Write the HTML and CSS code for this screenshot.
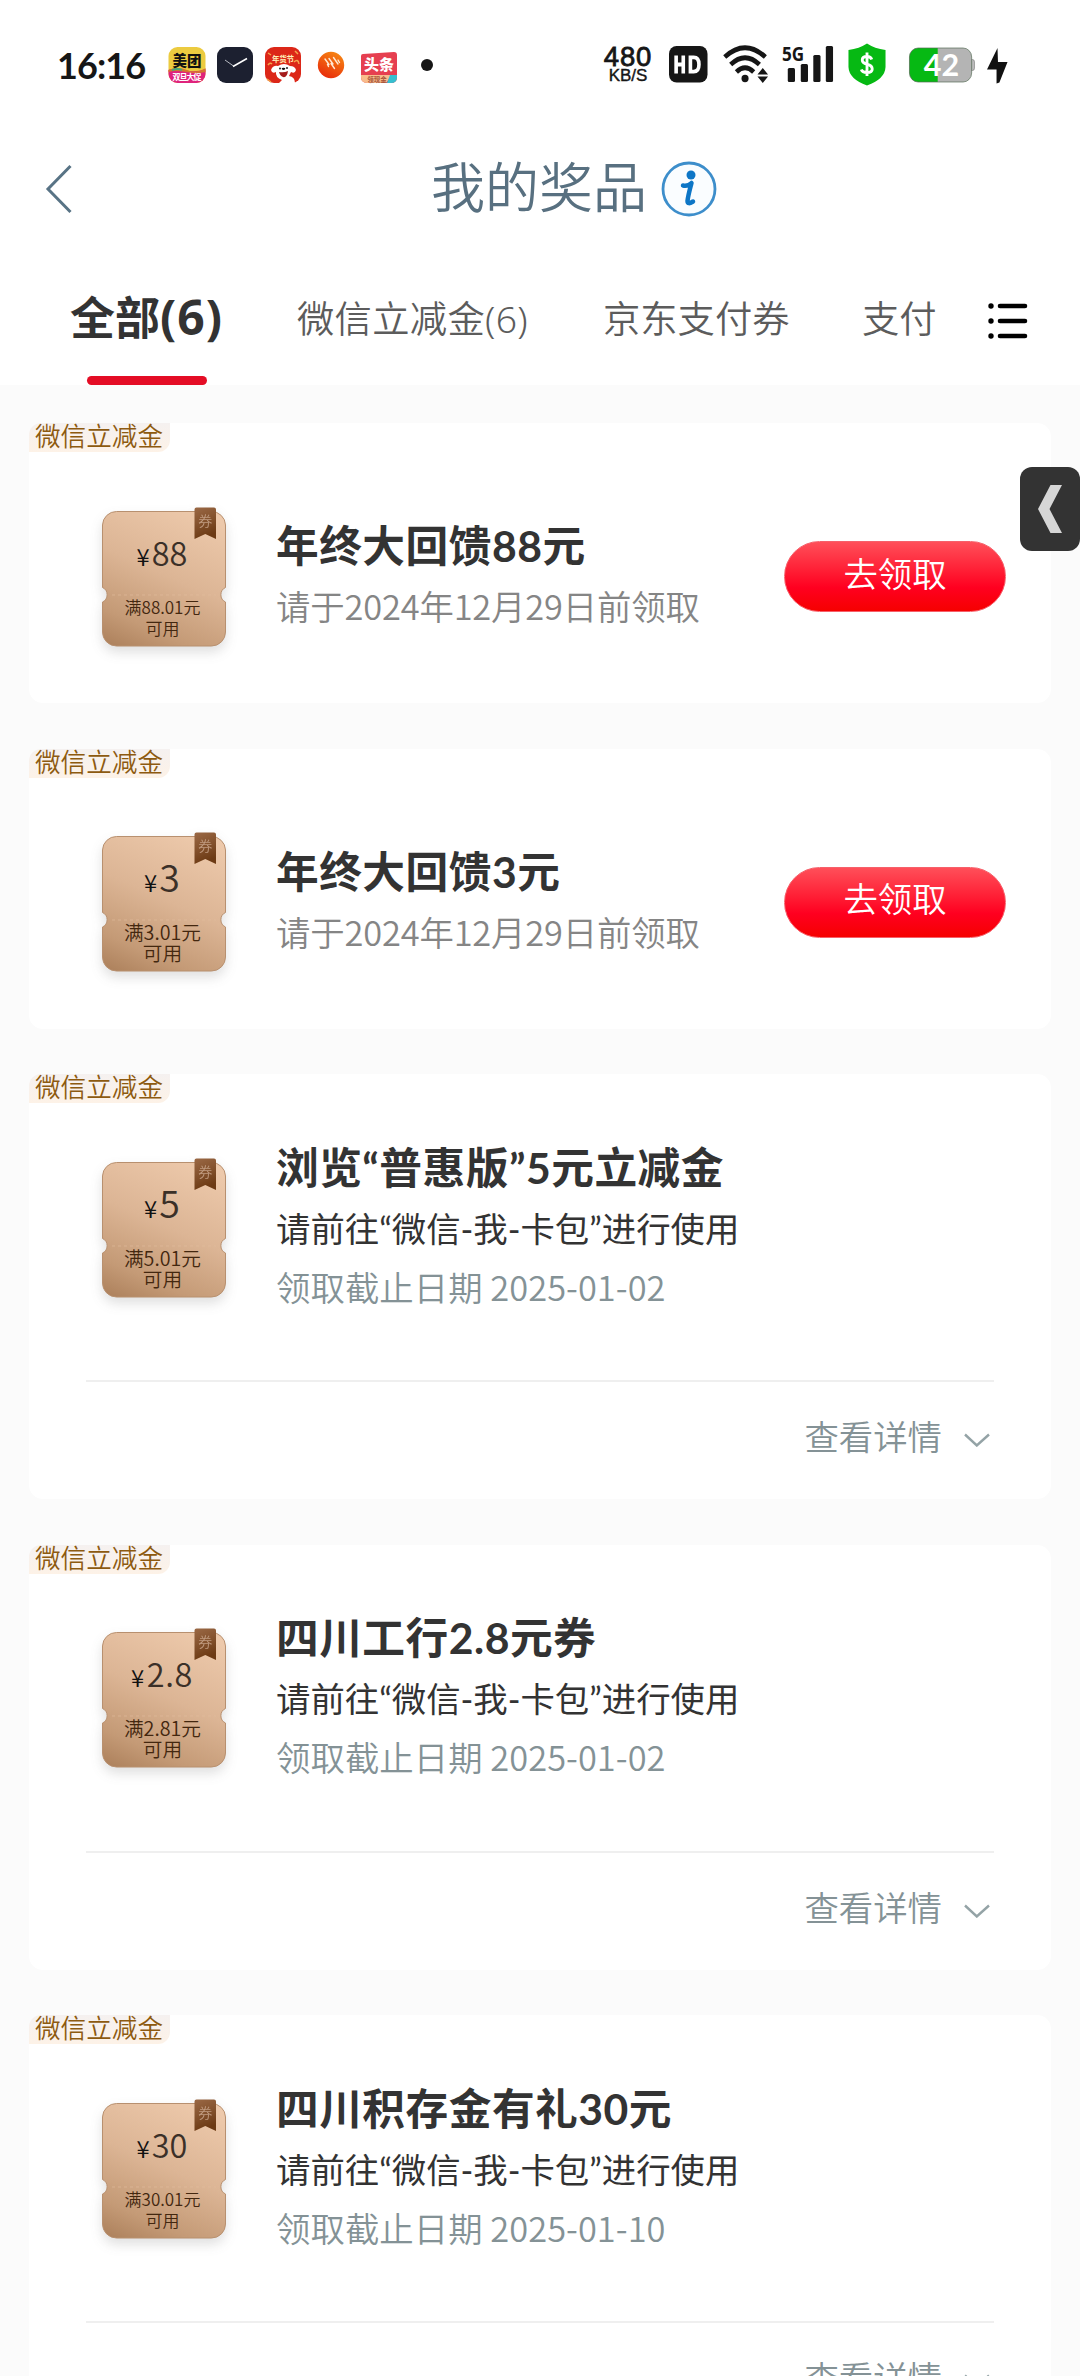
FILE: index.html
```html
<!DOCTYPE html>
<html lang="zh-CN">
<head>
<meta charset="utf-8">
<title>我的奖品</title>
<link rel="stylesheet" href="styles.css">
</head>
<body>
<svg class="defs" width="0" height="0" aria-hidden="true">
  <defs>
    <linearGradient id="copper" gradientUnits="userSpaceOnUse" x1="100" y1="10" x2="35" y2="155">
      <stop offset="0" stop-color="#edc9ab"/><stop offset="0.45" stop-color="#dcb595"/><stop offset="0.8" stop-color="#c49a76"/><stop offset="1" stop-color="#ad815c"/>
    </linearGradient>
    <linearGradient id="ribbon" x1="0" y1="0" x2="0.3" y2="1">
      <stop offset="0" stop-color="#9a6845"/><stop offset="0.5" stop-color="#85532e"/><stop offset="1" stop-color="#6c3a14"/>
    </linearGradient>
    <symbol id="coupon" viewBox="0 0 150 170">
      <path d="M28.500 14.500H123.500A14 14 0 0 1 137.500 28V90.500A8 8 0 0 0 137.500 105V135A14 14 0 0 1 123.500 149H28.500A14 14 0 0 1 14.500 135V105A8 8 0 0 0 14.500 90.500V28A14 14 0 0 1 28.500 14.500Z" fill="url(#copper)" stroke="#b8906f" stroke-width="1"/>
      <path d="M24 98H128" stroke="#e2bd9e" stroke-width="1" stroke-dasharray="3 3" opacity=".6"/>
      <path d="M106.500 12.500a2 2 0 0 1 2-2h17.500a2 2 0 0 1 2 2v29.500l-10.700-5-10.800 5z" fill="url(#ribbon)"/>
      <text x="117.300" y="29" font-size="14" text-anchor="middle" fill="#c09b80">券</text>
    </symbol>
    <symbol id="down" viewBox="0 0 26 14"><path d="M1 1.500 12.800 12.500 25 1.500" fill="none" stroke="#94a3a6" stroke-width="2.400"/></symbol>
  </defs>
</svg>

<header class="status">
  <span class="time">16:16</span>
  <svg class="app meituan" width="38" height="38" viewBox="0 0 38 38">
    <defs><clipPath id="mt"><rect x="0.500" y="1" width="37" height="36" rx="9"/></clipPath></defs>
    <g clip-path="url(#mt)"><rect width="38" height="38" fill="#eccb40"/><path d="M0 24Q8 21 17 24T38 23V38H0Z" fill="#df237c"/><path d="M0 24Q10 20 19 24T38 22V26Q28 28 18 26T0 26Z" fill="#d5762e"/><path d="M4 24q6-2 10 0" stroke="#45a67a" stroke-width="2" fill="none"/></g>
    <text x="19" y="20" font-size="14.500" font-weight="900" text-anchor="middle" fill="#111">美团</text>
    <text x="19" y="34" font-size="8" font-weight="700" text-anchor="middle" textLength="29" fill="#fff">双旦大促</text>
  </svg>
  <svg class="app" width="38" height="38" viewBox="0 0 38 38"><rect x="1" y="1" width="36" height="36" rx="9" fill="#1c2030"/><path d="M9 14 17.500 20" stroke="#b5b8c0" stroke-width="1"/><path d="M17 20.500 31 12.500" stroke="#fff" stroke-width="1.600"/></svg>
  <svg class="app" width="38" height="38" viewBox="0 0 38 38">
    <rect x="1" y="1" width="36" height="36" rx="9" fill="#dc2718"/>
    <path d="M4 7l3 2M31 5l3 3M3 33l4 3M30 16q4-4 5 2M4 19q2-3 4-1" stroke="#f4a44b" stroke-width="1.500" fill="none"/>
    <text x="19" y="15.500" font-size="7.500" font-weight="700" text-anchor="middle" textLength="22" fill="#fff0b8">年货节</text>
    <path d="M7 24Q9 19 14 20Q20 16 26 20Q31 20 32 24Q31 28 27 26L25 30Q31 31 31 37H15L18 34Q11 31 12 26Q8 28 7 24Z" fill="#fff"/>
    <circle cx="16" cy="22.500" r="1" fill="#222"/><circle cx="23" cy="22" r="1" fill="#222"/><ellipse cx="19.500" cy="22.800" rx="1.800" ry="1.100" fill="#111"/><path d="M15 26Q20 27 24 25Q23 32 19 31Q16 30 15 26Z" fill="#a51c1c"/>
  </svg>
  <svg class="app ball" width="28" height="28" viewBox="0 0 28 28"><defs><linearGradient id="or" x1=".8" y1="0" x2=".3" y2="1"><stop offset="0" stop-color="#f78812"/><stop offset="1" stop-color="#e82b0b"/></linearGradient></defs><circle cx="14" cy="14" r="13.200" fill="url(#or)"/><path d="M8 8 12 13.500M12 7.500 16 13M16.500 6.500 21 13M14 12.500 17.500 17.500M10.500 13.500 11.500 15.500M21 9 22.500 11.500" stroke="#ffe9d4" stroke-width="1.400" stroke-linecap="round"/></svg>
  <svg class="app news" width="38" height="34" viewBox="0 0 38 34"><path d="M1 5Q1 3 3 3L34 1Q37 1 37 4V26Q37 32 31 32H8Q1 32 1 26Z" fill="#e63f50"/><path d="M1 24H32L26 32H8Q1 32 1 26Z" fill="#f8bd8d"/><path d="M30 24H37V26Q37 32 31 32H27Z" fill="#36bfd0"/><text x="19" y="19" font-size="15" font-weight="900" text-anchor="middle" fill="#fff">头条</text><text x="17" y="30.500" font-size="6.500" font-weight="700" text-anchor="middle" fill="#a9543a">领现金</text></svg>
  <span class="dot"></span>
  <span class="speed"><b>480</b><i>KB/S</i></span>
  <svg class="hd" width="39" height="37" viewBox="0 0 41 37" preserveAspectRatio="none"><rect width="40.500" height="36.500" rx="8" fill="#161616"/><path d="M7.500 9.500V27.500M15 9.500V27.500M7.500 18.500H15" stroke="#fff" stroke-width="3.800" fill="none"/><path d="M22.500 11.400V25.600H26Q31.500 25.600 31.500 18.500T26 11.400Z" stroke="#fff" stroke-width="3.800" fill="none"/></svg>
  <svg class="wifi" width="46" height="38" viewBox="0 0 48 38" preserveAspectRatio="none"><g fill="none" stroke="#161616" stroke-width="4.800"><path d="M1.800 12Q23 -6.500 44.200 12"/><path d="M8 19.500Q23 6 38 19.500"/><path d="M14 27Q23 18.500 32 27"/></g><circle cx="23" cy="33.500" r="3.700" fill="#161616"/><path d="M36 29.500 41.500 23 47 29.500ZM36 31.500H47L41.500 38Z" fill="#161616"/></svg>
  <svg class="signal" width="52" height="38" viewBox="0 0 54 38" preserveAspectRatio="none"><text x="0" y="16" font-size="20" font-weight="700" textLength="23" lengthAdjust="spacingAndGlyphs" fill="#161616">5G</text><g fill="#161616"><rect x="6" y="23" width="7.500" height="14" rx="1.500"/><rect x="19.500" y="19" width="7.500" height="18" rx="1.500"/><rect x="32.500" y="10" width="7.500" height="27" rx="1.500"/><rect x="45.500" y="1" width="7.500" height="36" rx="1.500"/></g></svg>
  <svg class="shield" width="38" height="43" viewBox="0 0 40 43" preserveAspectRatio="none"><path d="M20 .5Q28 5.500 39.500 7V24Q39 36 20 42.500Q1 36 .5 24V7Q12 5.500 20 .5Z" fill="#06b913"/><path d="M25 16.500Q24 13.500 20 13.500Q15 13.500 15 17Q15 20 20 21.200Q25.500 22.500 25.500 26Q25.500 29.500 20 29.500Q15 29.500 14 26.500M20 9.500V33" fill="none" stroke="#fff" stroke-width="3"/></svg>
  <svg class="battery" width="66" height="36" viewBox="0 0 69 36" preserveAspectRatio="none"><defs><clipPath id="bt"><rect x=".5" y="1" width="65" height="34" rx="9"/></clipPath></defs><path d="M65 12.500H66.500Q68.500 12.500 68.500 15V21Q68.500 23.500 66.500 23.500H65Z" fill="#bcbcbc" stroke="#777" stroke-width=".6"/><g clip-path="url(#bt)"><rect width="69" height="36" fill="#b4b4b4"/><rect width="30" height="36" fill="#06b913"/></g><rect x=".5" y="1" width="65" height="34" rx="9" fill="none" stroke="#556b55" stroke-width=".7"/><text x="34" y="28.500" font-size="30" font-weight="700" text-anchor="middle" textLength="37" lengthAdjust="spacingAndGlyphs" fill="#fff">42</text></svg>
  <svg class="bolt" width="21" height="36" viewBox="0 0 22 36" preserveAspectRatio="none"><path d="M11 0 0 21.500H10V35.500L13 34.500 21.500 14H11.500Z" fill="#111"/></svg>
</header>

<nav class="titlebar">
  <svg class="back" width="28" height="50" viewBox="0 0 28 50"><path d="M25.500 2 3 25 25.500 48" fill="none" stroke="#587385" stroke-width="3"/></svg>
  <h1>我的奖品</h1>
  <svg class="info" width="58" height="58" viewBox="0 0 58 58"><circle cx="29" cy="29" r="26" fill="#fafdff" stroke="#3d8ecb" stroke-width="2.800"/><circle cx="31" cy="15" r="4.500" fill="#0d76c6"/><path d="M23 25.500Q28 26.500 31.500 23Q28 36 27.500 41Q27.500 45 33 41.500" fill="none" stroke="#0d76c6" stroke-width="4.500" stroke-linejoin="round" stroke-linecap="round"/></svg>
</nav>

<nav class="tabs">
  <a class="tab active">全部<span class="count">(6)</span></a>
  <a class="tab t2">微信立减金(6)</a>
  <a class="tab t3">京东支付券</a>
  <a class="tab t4">支付</a>
  <svg class="menu" width="40" height="36" viewBox="0 0 40 36"><path d="M12 3H37M12 18H37M12 33H37" stroke="#000" stroke-width="4.600" stroke-linecap="round"/><g fill="#000"><circle cx="3" cy="3" r="2.700"/><circle cx="3" cy="18" r="2.700"/><circle cx="3" cy="33" r="2.700"/></g></svg>
</nav>

<main class="list">
  <article class="card short">
    <span class="tag">微信立减金</span>
    <div class="body">
      <div class="coupon small"><svg width="150" height="170"><use href="#coupon"/></svg><p class="amount"><i>¥</i>88</p><p class="rule">满88.01元<br>可用</p></div>
      <div class="text"><h2>年终大回馈88元</h2><p class="due">请于2024年12月29日前领取</p></div>
      <button class="claim">去领取</button>
    </div>
  </article>
  <article class="card short">
    <span class="tag">微信立减金</span>
    <div class="body">
      <div class="coupon"><svg width="150" height="170"><use href="#coupon"/></svg><p class="amount"><i>¥</i>3</p><p class="rule">满3.01元<br>可用</p></div>
      <div class="text"><h2>年终大回馈3元</h2><p class="due">请于2024年12月29日前领取</p></div>
      <button class="claim">去领取</button>
    </div>
  </article>
  <article class="card">
    <span class="tag">微信立减金</span>
    <div class="body">
      <div class="coupon"><svg width="150" height="170"><use href="#coupon"/></svg><p class="amount"><i>¥</i>5</p><p class="rule">满5.01元<br>可用</p></div>
      <div class="text"><h2>浏览“普惠版”5元立减金</h2><p class="where">请前往“微信-我-卡包”进行使用</p><p class="until">领取截止日期 2025-01-02</p></div>
    </div>
    <footer class="more"><span>查看详情</span><svg width="26" height="14"><use href="#down"/></svg></footer>
  </article>
  <article class="card">
    <span class="tag">微信立减金</span>
    <div class="body">
      <div class="coupon mid"><svg width="150" height="170"><use href="#coupon"/></svg><p class="amount"><i>¥</i>2.8</p><p class="rule">满2.81元<br>可用</p></div>
      <div class="text"><h2>四川工行2.8元券</h2><p class="where">请前往“微信-我-卡包”进行使用</p><p class="until">领取截止日期 2025-01-02</p></div>
    </div>
    <footer class="more"><span>查看详情</span><svg width="26" height="14"><use href="#down"/></svg></footer>
  </article>
  <article class="card">
    <span class="tag">微信立减金</span>
    <div class="body">
      <div class="coupon small"><svg width="150" height="170"><use href="#coupon"/></svg><p class="amount"><i>¥</i>30</p><p class="rule">满30.01元<br>可用</p></div>
      <div class="text"><h2>四川积存金有礼30元</h2><p class="where">请前往“微信-我-卡包”进行使用</p><p class="until">领取截止日期 2025-01-10</p></div>
    </div>
    <footer class="more"><span>查看详情</span><svg width="26" height="14"><use href="#down"/></svg></footer>
  </article>
</main>

<aside class="drawer"><svg width="26" height="50" viewBox="0 0 26 50"><path d="M13.500 1H25L12.500 25 25 49H13.500L1 25Z" fill="#d6d6d6"/></svg></aside>
</body>
</html>
```
FILE: styles.css
```css
* { box-sizing: border-box; margin: 0; padding: 0; }
html { height: 2376px; overflow: hidden; }
body {
  position: relative;
  width: 1080px;
  height: 2376px;
  overflow: hidden;
  background: #fbfbfb;
  font-family: Lato, "Noto Sans CJK SC", sans-serif;
  font-weight: 350;
  color: #333;
}
i { font-style: normal; }
svg { display: block; flex: none; }
.defs { position: absolute; }

/* status bar */
.status { display: flex; align-items: flex-start; height: 130px; padding: 46px 0 0 57px; background: #fff; color: #161616; }
.status svg { overflow: visible; }
.time { width: 111px; height: 38px; font-family: Lato, sans-serif; font-size: 36px; line-height: 38px; font-weight: 700; letter-spacing: -0.9px; }
.app { margin-right: 10px; }
.ball { margin: 5px 15px 0 5px; }
.news { margin: 5px 23px 0 0; }
.dot { width: 12px; height: 12px; margin: 13px 0 0; border-radius: 50%; background: #161616; }
.speed { display: flex; flex-direction: column; align-items: center; width: 54px; margin-left: 168px; font-family: "Liberation Sans", sans-serif; }
.speed b { height: 21px; font-size: 27.500px; line-height: 22px; font-weight: 400; letter-spacing: 0.8px; -webkit-text-stroke: 0.8px #161616; }
.speed i { height: 16px; font-size: 17px; line-height: 17px; font-weight: 400; -webkit-text-stroke: 0.4px #161616; }
.hd { margin-left: 14px; }
.wifi { margin-left: 15px; margin-top: -1px; }
.signal { margin-left: 13px; margin-top: -1px; font-family: "Noto Sans", sans-serif; }
.shield { margin: -3px 0 0 14px; }
.battery { margin: 1px 0 0 23px; }
.bolt { margin: 2px 0 0 12px; }

/* title bar */
.titlebar { display: flex; align-items: center; height: 118px; padding-left: 45px; background: #fff; }
.titlebar h1 { margin-left: 358px; margin-top: -2px; width: 216px; font-size: 54px; line-height: 60px; font-weight: 350; color: #587080; white-space: nowrap; }
.info { margin-left: 13px; }

/* tabs */
.tabs { position: relative; display: flex; align-items: center; height: 137px; padding: 5px 0 0 70px; background: #fff; font-family: "Noto Sans", "Noto Sans CJK SC", sans-serif; white-space: nowrap; }
.tab { font-size: 37.300px; line-height: 60px; color: #5c5c5c; }
.tab.active { width: 153px; margin-top: -2px; font-size: 45px; font-weight: 700; color: #333; }
.tab.active .count { font-size: 48px; line-height: 1; letter-spacing: 1px; }
.tab.active::after { content: ""; position: absolute; left: 87px; bottom: 0; width: 120px; height: 9px; border-radius: 5px; background: #e40d25; }
.t2 { width: 232px; margin-left: 74px; letter-spacing: 0.300px; }
.t3 { width: 187px; margin-left: 74px; }
.t4 { width: 75px; margin-left: 72px; }
.menu { margin: 4px 0 0 51px; }

/* prize cards */
.list { display: flex; flex-direction: column; gap: 45.500px; padding: 38px 29px 0; }
.card { flex: none; height: 425px; border-radius: 14px; background: #fff; }
.card.short { height: 280px; }
.tag { display: block; width: 141px; height: 29px; padding-left: 6px; border-radius: 12px 0 12px 0; background: linear-gradient(#f5f1f0, #fdf2e7); font-size: 25.600px; line-height: 26px; color: #8d5a10; white-space: nowrap; }
.body { display: flex; height: 220px; padding-left: 59px; }
.coupon { position: relative; flex: none; width: 150px; height: 170px; margin-top: 44.500px; text-align: center; font-family: "Noto Sans CJK SC", sans-serif; }
.coupon svg { filter: drop-shadow(0 6px 6px rgba(60, 60, 60, .16)); }
.amount { position: absolute; left: 0; right: 2px; top: 32px; height: 44px; font-size: 37.500px; line-height: 44px; color: #3b3028; }
.amount i { margin-right: 2px; font-size: 24px; color: #111; }
.rule { position: absolute; left: 0; right: 1px; top: 99px; font-size: 19.700px; line-height: 21px; color: #43270f; }
.small .amount { top: 33px; font-size: 32.500px; }
.small .rule { font-size: 17px; }
.mid .amount { top: 33px; font-size: 32.500px; letter-spacing: 0.600px; }
.text { width: 508px; margin-left: 38px; padding-top: 36.500px; white-space: nowrap; }
.short .text { padding-top: 66px; }
.text h2 { height: 59px; font-size: 42.700px; line-height: 56px; font-weight: 700; letter-spacing: 0.500px; color: #333; }
.text p { height: 59px; font-size: 34.400px; line-height: 60px; }
.text .where { font-weight: 400; }
.text .due, .text .until { font-family: "Noto Sans CJK SC", sans-serif; line-height: 57px; }
.text .due { letter-spacing: -0.150px; color: #858585; }
.text .until { letter-spacing: 0.050px; color: #849296; }
.claim { width: 222px; height: 71px; margin-top: 89px; padding-bottom: 6px; border: 1px solid #f6606a; border-radius: 36px; background: linear-gradient(#ff4f59, #ff2036 40%, #ff0020 66%, #f60000); font: inherit; font-size: 34.400px; line-height: 60px; color: #fff; }
.more { display: flex; align-items: center; justify-content: flex-end; height: 118px; margin: 57px 57px 0; padding: 0 4px 10px 0; border-top: 2px solid #efefef; font-size: 34.400px; color: #849296; }
.more svg { margin: 10px 0 0 22px; }

/* floating drawer handle */
.drawer { position: absolute; top: 467px; right: 0; display: flex; align-items: center; width: 60px; height: 84px; padding-left: 17px; border-radius: 12px; background: #333; }
```
